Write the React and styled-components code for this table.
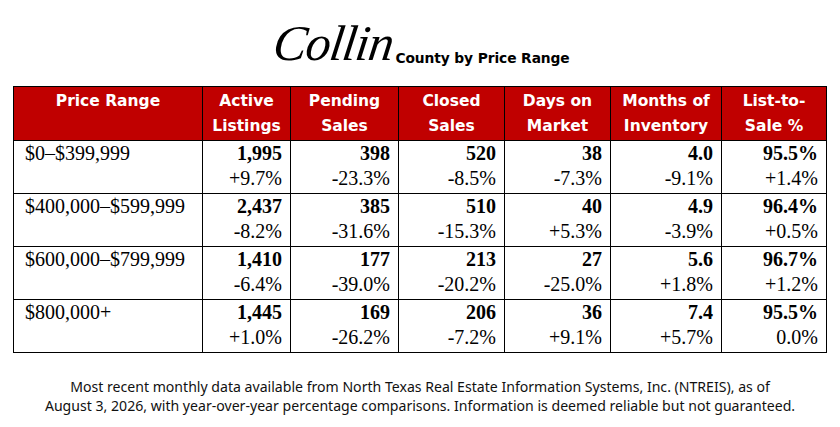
import React from 'react'
import styled, { createGlobalStyle } from 'styled-components'

const GlobalStyle = createGlobalStyle`
  html, body {
    margin: 0;
    padding: 0;
    background: #ffffff;
  }
`

const Page = styled.div`
  width: 840px;
  height: 427px;
  display: flex;
  flex-direction: column;
  align-items: center;
  background: #fff;
  color: #000;
`

const TitleRow = styled.div`
  display: flex;
  align-items: flex-end;
  height: 62px;
  margin-top: 8px;
  margin-left: 4px;
`

const Script = styled.span`
  font-family: "Liberation Serif", serif;
  font-style: italic;
  font-weight: 400;
  font-size: 50px;
  line-height: 1;
  letter-spacing: -1px;
  transform: skewX(-8deg);
  margin-bottom: 2px;
`

const Subtitle = styled.span`
  font-family: "DejaVu Sans", "Open Sans", sans-serif;
  font-weight: 700;
  font-size: 13.8px;
  letter-spacing: -0.1px;
  margin-left: 2px;
  margin-bottom: 4px;
`

const Table = styled.table`
  border-collapse: collapse;
  table-layout: fixed;
  width: 813px;
  margin-top: 16px;
`

const HeadCell = styled.th`
  background: #c00000;
  color: #fff;
  font-family: "DejaVu Sans", "Open Sans", sans-serif;
  font-weight: 700;
  font-size: 15.5px;
  line-height: 25px;
  text-align: center;
  vertical-align: top;
  padding: 2px 2px 1px;
  height: 50px;
  border: 1.5px solid #000;
  box-sizing: border-box;
`

const Cell = styled.td`
  font-family: "Liberation Serif", "Times New Roman", serif;
  font-size: 20px;
  line-height: 25px;
  text-align: ${p => (p.label ? 'left' : 'right')};
  vertical-align: top;
  padding: ${p => (p.label ? '0 8px 2px 11px' : '0 8px 2px 4px')};
  height: 50px;
  border: 1.5px solid #000;
  white-space: nowrap;
`

const Value = styled.div`
  font-weight: 700;
`

const Change = styled.div`
  font-weight: 400;
`

const Footer = styled.p`
  font-family: "Noto Sans", Inter, sans-serif;
  font-size: 14.1px;
  line-height: 18.5px;
  text-align: center;
  margin: 25px 0 0;
  color: #111;
`

const widths = [189, 88, 108, 106, 106, 111, 105]

const headers = [
  ['Price Range'],
  ['Active', 'Listings'],
  ['Pending', 'Sales'],
  ['Closed', 'Sales'],
  ['Days on', 'Market'],
  ['Months of', 'Inventory'],
  ['List-to-', 'Sale %'],
]

const rows = [
  {
    range: '$0–$399,999',
    cells: [['1,995', '+9.7%'], ['398', '-23.3%'], ['520', '-8.5%'], ['38', '-7.3%'], ['4.0', '-9.1%'], ['95.5%', '+1.4%']],
  },
  {
    range: '$400,000–$599,999',
    cells: [['2,437', '-8.2%'], ['385', '-31.6%'], ['510', '-15.3%'], ['40', '+5.3%'], ['4.9', '-3.9%'], ['96.4%', '+0.5%']],
  },
  {
    range: '$600,000–$799,999',
    cells: [['1,410', '-6.4%'], ['177', '-39.0%'], ['213', '-20.2%'], ['27', '-25.0%'], ['5.6', '+1.8%'], ['96.7%', '+1.2%']],
  },
  {
    range: '$800,000+',
    cells: [['1,445', '+1.0%'], ['169', '-26.2%'], ['206', '-7.2%'], ['36', '+9.1%'], ['7.4', '+5.7%'], ['95.5%', '0.0%']],
  },
]

export default function App() {
  return (
    <>
      <GlobalStyle />
      <Page>
        <TitleRow>
          <Script>Collin</Script>
          <Subtitle>County by Price Range</Subtitle>
        </TitleRow>

        <Table>
          <colgroup>
            {widths.map((w, i) => <col key={i} style={{ width: w }} />)}
          </colgroup>
          <thead>
            <tr>
              {headers.map((h, i) => (
                <HeadCell key={i}>
                  {h.map((line, j) => <div key={j}>{line}</div>)}
                </HeadCell>
              ))}
            </tr>
          </thead>
          <tbody>
            {rows.map(row => (
              <tr key={row.range}>
                <Cell label>{row.range}</Cell>
                {row.cells.map(([v, c], i) => (
                  <Cell key={i}>
                    <Value>{v}</Value>
                    <Change>{c}</Change>
                  </Cell>
                ))}
              </tr>
            ))}
          </tbody>
        </Table>

        <Footer>
          Most recent monthly data available from North Texas Real Estate Information Systems, Inc. (NTREIS), as of
          <br />
          August 3, 2026, with year-over-year percentage comparisons. Information is deemed reliable but not guaranteed.
        </Footer>
      </Page>
    </>
  )
}
